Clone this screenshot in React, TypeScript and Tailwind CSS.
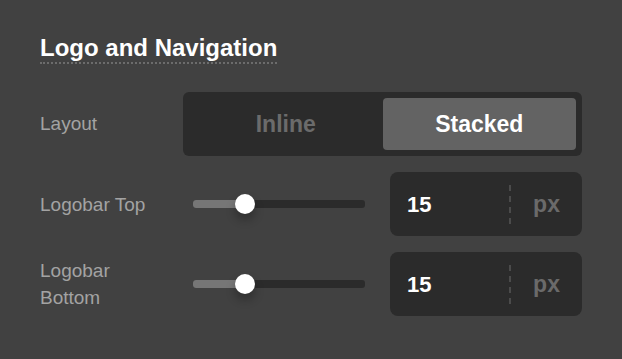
import React, { useState } from 'react';

// Logo & navigation settings panel

const SliderRow: React.FC<{ label: string; value: number }> = ({ label, value }) => {
  // thumb offset in px along a 172px track
  const offset = 52;
  return (
    <div className="flex items-center">
      <div className="w-[143px] pr-[20px] text-[19px] leading-[27px] text-[#a3a3a3]">{label}</div>
      <div className="flex-1 px-[10px]">
        <div className="relative h-[8px] rounded-[3px] bg-[#2b2b2b]">
          <div className="absolute left-0 top-0 h-full rounded-l-[3px] bg-[#767676]" style={{ width: offset }} />
          <div
            className="absolute top-1/2 w-[20px] h-[20px] -translate-x-1/2 -translate-y-1/2 rounded-full bg-white shadow-[0_6px_10px_rgba(0,0,0,0.28)]"
            style={{ left: offset }}
          />
        </div>
      </div>
      <div className="ml-[15px] w-[192px] h-[64px] rounded-[8px] bg-[#2b2b2b] flex items-center">
        <div className="w-[119px] pl-[17px] text-[22px] font-bold text-white">{value}</div>
        <div className="h-[39px] border-l-2 border-dashed border-[#4b4b4b]" />
        <div className="flex-1 text-center text-[23px] font-bold text-[#6a6a6a]">px</div>
      </div>
    </div>
  );
};

const App: React.FC = () => {
  const [layout, setLayout] = useState<'inline' | 'stacked'>('stacked');

  return (
    <div className="w-[622px] h-[359px] bg-[#414141] px-[40px] pt-[34px] font-['Liberation_Sans',Arial,sans-serif]">
      <h2 className="inline-block text-[24px] leading-[28px] font-bold text-white border-b-2 border-dotted border-[#6c6c6c]">
        Logo and Navigation
      </h2>

      <div className="mt-[28px] flex flex-col gap-[16px]">
        {/* Layout toggle */}
        <div className="flex items-center">
          <div className="w-[143px] text-[19px] text-[#a3a3a3]">Layout</div>
          <div className="flex-1 h-[64px] rounded-[6px] bg-[#2b2b2b] p-[6px] flex">
            <button
              onClick={() => setLayout('inline')}
              className={`flex-1 rounded-[4px] text-[23px] font-bold ${
                layout === 'inline' ? 'bg-[#636363] text-white' : 'text-[#6b6b6b]'
              }`}
            >
              Inline
            </button>
            <button
              onClick={() => setLayout('stacked')}
              className={`flex-1 rounded-[4px] text-[23px] font-bold ${
                layout === 'stacked' ? 'bg-[#636363] text-white' : 'text-[#6b6b6b]'
              }`}
            >
              Stacked
            </button>
          </div>
        </div>

        <SliderRow label="Logobar Top" value={15} />
        <SliderRow label="Logobar Bottom" value={15} />
      </div>
    </div>
  );
};

export default App;
